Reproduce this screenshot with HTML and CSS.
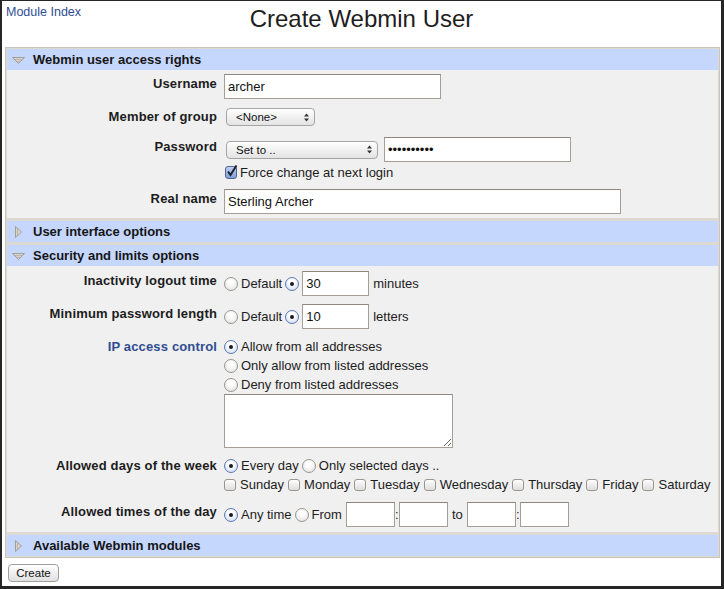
FILE: index.html
```html
<!DOCTYPE html>
<html>
<head>
<meta charset="utf-8">
<title>Create Webmin User</title>
<link rel="stylesheet" href="styles.css">
</head>
<body>
<div class="window">
  <div class="topbar">
    <a class="modlink" href="#">Module Index</a>
    <h1 class="title">Create Webmin User</h1>
    <span></span>
  </div>

  <div class="frame">
    <section class="sec">
      <div class="sec-head">
        <span class="tri-box"><svg class="tri-down" width="13" height="7" viewBox="0 0 13 7"><polygon points="0.5,0.5 12.5,0.5 6.5,6.5" fill="#d6d2ca" stroke="#a29e96" stroke-width="1"/><line x1="3" y1="2.5" x2="10" y2="2.5" stroke="#bdb9b1"/><line x1="5" y1="4.5" x2="8" y2="4.5" stroke="#bdb9b1"/></svg></span>
        <span>Webmin user access rights</span>
      </div>
      <div class="sec-body">
        <div class="lbl">Username</div>
        <div class="val"><input class="txt w-user" type="text" value="archer"></div>

        <div class="lbl">Member of group</div>
        <div class="val val-sel">
          <span class="sel w-group">&lt;None&gt;<svg class="arrows" width="5" height="9" viewBox="0 0 5 9"><polygon points="0,3.5 2.5,0.5 5,3.5" fill="#333"/><polygon points="0,5.5 5,5.5 2.5,8.5" fill="#333"/></svg></span>
        </div>

        <div class="lbl">Password</div>
        <div class="val">
          <div class="line">
            <span class="sel w-pass">Set to ..<svg class="arrows" width="5" height="9" viewBox="0 0 5 9"><polygon points="0,3.5 2.5,0.5 5,3.5" fill="#333"/><polygon points="0,5.5 5,5.5 2.5,8.5" fill="#333"/></svg></span>
            <input class="txt w-pw" type="password" value="1234567890">
          </div>
          <div class="line line-cb">
            <span class="cb cb-on"><svg width="14" height="15" viewBox="0 0 14 15"><path d="M3 7.5 L5.5 11 L11.5 1.5" fill="none" stroke="#1b2230" stroke-width="2"/></svg></span>
            <span>Force change at next login</span>
          </div>
        </div>

        <div class="lbl">Real name</div>
        <div class="val"><input class="txt w-real" type="text" value="Sterling Archer"></div>
      </div>
    </section>

    <section class="sec">
      <div class="sec-head">
        <span class="tri-box"><svg width="7" height="12" viewBox="0 0 7 12"><polygon points="0.5,0.5 6.5,6 0.5,11.5" fill="#d6d2ca" stroke="#a29e96" stroke-width="1"/><line x1="2.5" y1="3" x2="2.5" y2="9" stroke="#bdb9b1"/></svg></span>
        <span>User interface options</span>
      </div>
    </section>

    <section class="sec">
      <div class="sec-head">
        <span class="tri-box"><svg class="tri-down" width="13" height="7" viewBox="0 0 13 7"><polygon points="0.5,0.5 12.5,0.5 6.5,6.5" fill="#d6d2ca" stroke="#a29e96" stroke-width="1"/><line x1="3" y1="2.5" x2="10" y2="2.5" stroke="#bdb9b1"/><line x1="5" y1="4.5" x2="8" y2="4.5" stroke="#bdb9b1"/></svg></span>
        <span>Security and limits options</span>
      </div>
      <div class="sec-body sec-body-2">
        <div class="lbl">Inactivity logout time</div>
        <div class="val">
          <div class="line">
            <span class="radio"></span><span>Default</span>
            <span class="radio radio-on"></span>
            <input class="txt w-num" type="text" value="30">
            <span class="unit">minutes</span>
          </div>
        </div>

        <div class="lbl">Minimum password length</div>
        <div class="val">
          <div class="line">
            <span class="radio"></span><span>Default</span>
            <span class="radio radio-on"></span>
            <input class="txt w-num" type="text" value="10">
            <span class="unit">letters</span>
          </div>
        </div>

        <div class="lbl lbl-link">IP access control</div>
        <div class="val">
          <div class="line line-19"><span class="radio radio-on"></span><span>Allow from all addresses</span></div>
          <div class="line line-19"><span class="radio"></span><span>Only allow from listed addresses</span></div>
          <div class="line line-19"><span class="radio"></span><span>Deny from listed addresses</span></div>
          <textarea class="ta"></textarea>
        </div>

        <div class="lbl">Allowed days of the week</div>
        <div class="val">
          <div class="line line-19"><span class="radio radio-on"></span><span>Every day</span><span class="radio"></span><span>Only selected days ..</span></div>
          <div class="line line-19 days">
            <span class="cb"></span><span>Sunday</span>
            <span class="cb"></span><span>Monday</span>
            <span class="cb"></span><span>Tuesday</span>
            <span class="cb"></span><span>Wednesday</span>
            <span class="cb"></span><span>Thursday</span>
            <span class="cb"></span><span>Friday</span>
            <span class="cb"></span><span>Saturday</span>
          </div>
        </div>

        <div class="lbl">Allowed times of the day</div>
        <div class="val">
          <div class="line times">
            <span class="radio radio-on"></span><span>Any time</span>
            <span class="radio"></span><span class="from">From</span>
            <input class="txt w-time" type="text"><span class="colon">:</span><input class="txt w-time" type="text">
            <span class="to">to</span>
            <input class="txt w-time" type="text"><span class="colon">:</span><input class="txt w-time" type="text">
          </div>
        </div>
      </div>
    </section>

    <section class="sec">
      <div class="sec-head">
        <span class="tri-box"><svg width="7" height="12" viewBox="0 0 7 12"><polygon points="0.5,0.5 6.5,6 0.5,11.5" fill="#d6d2ca" stroke="#a29e96" stroke-width="1"/><line x1="2.5" y1="3" x2="2.5" y2="9" stroke="#bdb9b1"/></svg></span>
        <span>Available Webmin modules</span>
      </div>
    </section>
  </div>

  <button class="btn" type="button">Create</button>
</div>
</body>
</html>
```

FILE: styles.css
```css
html, body {
  margin: 0;
  padding: 0;
  background: #fff;
}

body {
  font-family: "Liberation Sans", Arial, Helvetica, sans-serif;
  font-size: 13px;
  color: #1c1c1c;
}

.window {
  box-sizing: border-box;
  width: 724px;
  height: 589px;
  border-style: solid;
  border-color: #262626;
  border-width: 1px 3px 3px 2px;
  background: #fff;
  overflow: hidden;
}

.topbar {
  display: grid;
  grid-template-columns: 1fr auto 1fr;
  align-items: start;
  padding-top: 4px;
}

.modlink {
  font-size: 12.5px;
  line-height: 15px;
  color: #2f4c92;
  text-decoration: none;
  margin-left: 4px;
  justify-self: start;
}

.title {
  margin: 0;
  font-size: 24px;
  line-height: 28px;
  font-weight: normal;
  color: #1e1e1e;
}

.frame {
  margin: 14px 1px 0 3px;
  border: 1px solid #c9c5bd;
  padding: 1px;
  background: #dcd9d2;
  display: flex;
  flex-direction: column;
  gap: 3px;
}

.sec-head {
  display: flex;
  align-items: center;
  height: 21px;
  box-sizing: border-box;
  padding-top: 1px;
  line-height: 20px;
  background: #c6d7fd;
  font-weight: bold;
  font-size: 13px;
  color: #151515;
}

.tri-box {
  width: 23px;
  margin-right: 3px;
  display: flex;
  justify-content: center;
  align-items: center;
}

.sec-body {
  background: #f0f0f0;
  display: grid;
  grid-template-columns: 210px 1fr;
  column-gap: 7px;
  row-gap: 8px;
  padding: 4px 0 4px;
}

.sec-body-2 {
  padding: 5px 0 5px;
}

.lbl {
  text-align: right;
  font-weight: bold;
  font-size: 13px;
  letter-spacing: 0.15px;
  line-height: 20px;
  color: #1c1c1c;
  align-self: start;
}

.lbl-link {
  color: #2f4c92;
}

.val {
  display: flex;
  flex-direction: column;
  align-items: flex-start;
}

.val-sel {
  padding-top: 1px;
  height: 22px;
  box-sizing: border-box;
}

.line {
  display: flex;
  align-items: center;
  gap: 3px;
}

.line-19 {
  height: 19px;
}

.line-cb {
  height: 18px;
  margin-top: 1px;
  gap: 3px;
}

.txt {
  box-sizing: border-box;
  height: 25px;
  margin: 0;
  border: 1px solid #a59e94;
  border-top-color: #8e877d;
  background: #fff;
  padding: 0 3px;
  font-family: "Liberation Sans", Arial, sans-serif;
  font-size: 13px;
  color: #111;
  outline: none;
}

.w-user { width: 217px; }
.w-pw { width: 187px; margin-left: 3px; }
.w-real { width: 397px; }
.w-num { width: 67px; }
.w-time { width: 49px; }

.sel {
  box-sizing: border-box;
  display: inline-flex;
  align-items: center;
  justify-content: space-between;
  height: 18px;
  margin-left: 2px;
  padding: 0 5px 0 9px;
  border: 1px solid #a5a5a5;
  border-radius: 4px;
  background: linear-gradient(#fefefe, #f1f1f1 50%, #e3e3e3);
  font-size: 11.5px;
  color: #111;
}

.w-group { width: 89px; }
.w-pass { width: 152px; }

.radio {
  box-sizing: border-box;
  width: 14px;
  height: 14px;
  flex: 0 0 14px;
  border-radius: 50%;
  border: 1px solid #9a968e;
  background: radial-gradient(circle at 50% 35%, #ffffff 20%, #e2e2e2 90%);
  position: relative;
}

.radio-on {
  border-color: #5c78b0;
  background: radial-gradient(circle at 50% 35%, #ffffff 25%, #c9d8f2 95%);
}

.radio-on::after {
  content: "";
  position: absolute;
  left: 4px;
  top: 4px;
  width: 4px;
  height: 4px;
  border-radius: 50%;
  background: #1a1a1a;
}

.cb {
  box-sizing: border-box;
  width: 12px;
  height: 12px;
  flex: 0 0 12px;
  border: 1px solid #9a968e;
  border-radius: 3px;
  background: linear-gradient(#fdfdfd, #dedede);
  position: relative;
}

.cb-on {
  width: 12px;
  height: 13px;
  margin-left: 1px;
  border-color: #51658f;
  background: linear-gradient(#bfd0f0, #7f9fd6);
}

.cb-on svg {
  position: absolute;
  left: -1px;
  top: -3px;
}

.days {
  gap: 4px;
}

.ta {
  box-sizing: border-box;
  width: 229px;
  height: 54px;
  margin: 0;
  border: 1px solid #a59e94;
  border-top-color: #8e877d;
  background: #fff;
  font-family: "Liberation Sans", Arial, sans-serif;
  font-size: 13px;
  outline: none;
}

.unit {
  margin-left: 1px;
}

.times {
  gap: 3px;
}

.from {
  margin-right: 1px;
}

.colon {
  margin: 0 -3px;
  width: 4px;
  text-align: center;
}

.to {
  margin: 0 1px;
}

.btn {
  display: block;
  box-sizing: border-box;
  margin: 6px 0 0 6px;
  width: 51px;
  height: 18px;
  padding: 0;
  border: 1px solid #9e9e9e;
  border-radius: 4px;
  background: linear-gradient(#ffffff, #f0f0f0 50%, #e0e0e0);
  font-family: "Liberation Sans", Arial, sans-serif;
  font-size: 11.5px;
  color: #111;
}
```
